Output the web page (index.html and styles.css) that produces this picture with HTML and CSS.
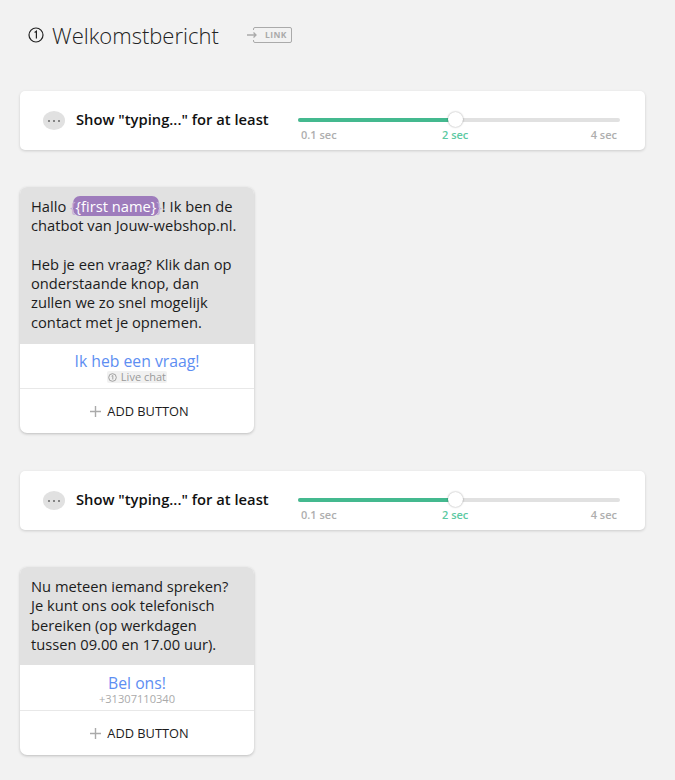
FILE: index.html
```html
<!DOCTYPE html>
<html lang="nl">
<head>
<meta charset="utf-8">
<title>Welkomstbericht</title>
<link rel="stylesheet" href="styles.css">
</head>
<body>
<header class="title-row">
  <svg class="info-icon" width="16" height="16" viewBox="0 0 16 16"><circle cx="8" cy="8" r="7" fill="none" stroke="#222" stroke-width="1.2"/><path d="M6.6 5.4 8.4 4.2V11.6" fill="none" stroke="#222" stroke-width="1.2"/></svg>
  <h1 class="title">Welkomstbericht</h1>
  <span class="link-badge">
    <svg class="link-arrow" width="12" height="10" viewBox="0 0 12 10"><path d="M0 5H9M6.5 2.5 9 5 6.5 7.5" fill="none" stroke="#aaa" stroke-width="1.3"/></svg>
    <span class="link-box">LINK</span>
  </span>
</header>

<section class="typing-card">
  <span class="dots"><i></i><i></i><i></i></span>
  <span class="typing-label">Show "typing..." for at least</span>
  <div class="slider">
    <div class="track"><div class="fill"></div><div class="knob"></div></div>
    <div class="ticks"><span>0.1 sec</span><span class="active">2 sec</span><span>4 sec</span></div>
  </div>
</section>

<section class="message first">
  <div class="bubble">Hallo <span class="brace">{</span><span class="pill">{first name}</span><span class="brace">}</span>! Ik ben de chatbot van Jouw-webshop.nl.<br><br>Heb je een vraag? Klik dan op onderstaande knop, dan zullen we zo snel mogelijk contact met je opnemen.</div>
  <div class="btn">
    <div class="btn-title">Ik heb een vraag!</div>
    <div class="btn-sub"><span class="chip"><svg width="9" height="9" viewBox="0 0 9 9"><circle cx="4.5" cy="4.5" r="3.8" fill="none" stroke="#999" stroke-width=".9"/><path d="M3.6 3.2 4.8 2.5V6.5" fill="none" stroke="#999" stroke-width=".9"/></svg> Live chat</span></div>
  </div>
  <div class="add"><svg width="11" height="11" viewBox="0 0 11 11"><path d="M5.5 0V11M0 5.5H11" stroke="#aaa" stroke-width="1.4"/></svg>ADD BUTTON</div>
</section>

<section class="typing-card second">
  <span class="dots"><i></i><i></i><i></i></span>
  <span class="typing-label">Show "typing..." for at least</span>
  <div class="slider">
    <div class="track"><div class="fill"></div><div class="knob"></div></div>
    <div class="ticks"><span>0.1 sec</span><span class="active">2 sec</span><span>4 sec</span></div>
  </div>
</section>

<section class="message last">
  <div class="bubble">Nu meteen iemand spreken? Je kunt ons ook telefonisch bereiken (op werkdagen tussen 09.00 en 17.00 uur).</div>
  <div class="btn">
    <div class="btn-title">Bel ons!</div>
    <div class="btn-sub phone">+31307110340</div>
  </div>
  <div class="add"><svg width="11" height="11" viewBox="0 0 11 11"><path d="M5.5 0V11M0 5.5H11" stroke="#aaa" stroke-width="1.4"/></svg>ADD BUTTON</div>
</section>
</body>
</html>
```
FILE: styles.css
```css
* { box-sizing: border-box; }
html, body { margin: 0; padding: 0; }
body {
  background: #f2f2f2;
  font-family: "Open Sans", sans-serif;
  color: #1a1a1a;
  height: 780px;
  overflow: hidden;
  padding: 20px 30px 0 20px;
}
.title-row {
  display: flex;
  align-items: center;
  height: 29px;
  padding-left: 8px;
}
.info-icon { flex: none; }
.title {
  margin: 0 0 0 8px;
  font-size: 22px;
  font-weight: 300;
  line-height: 30px;
  color: #222;
  width: 195px;
}
.link-badge { display: flex; align-items: center; }
.link-arrow { margin-right: -6px; position: relative; z-index: 1; background: #f2f2f2; }
.link-box {
  border: 1.5px solid #aaa;
  border-radius: 2px;
  font-size: 8.5px;
  font-weight: 700;
  color: #aaa;
  letter-spacing: .4px;
  line-height: 13px;
  height: 16px;
  padding: 0 4px 0 11px;
}
.typing-card {
  display: flex;
  align-items: flex-start;
  height: 59px;
  margin-top: 42px;
  background: #fff;
  border-radius: 5px;
  box-shadow: 0 1px 3px rgba(0,0,0,.16);
  padding: 0 25px 0 23px;
}
.typing-card.second { margin-top: 38px; }
.dots {
  display: flex;
  gap: 3px;
  align-items: center;
  justify-content: center;
  flex: none;
  width: 22px;
  height: 19px;
  margin-top: 20px;
  border-radius: 50%;
  background: #e1e1e1;
}
.dots i { width: 2px; height: 2px; border-radius: 50%; background: #666; }
.typing-label {
  flex: none;
  width: 222px;
  margin: 18px 0 0 11px;
  font-size: 14.75px;
  font-weight: 600;
  line-height: 20px;
  color: #111;
}
.slider { flex: 1; padding-top: 27px; }
.track {
  position: relative;
  height: 4px;
  border-radius: 2px;
  background: #e1e1e1;
}
.fill {
  width: 157px;
  height: 4px;
  border-radius: 2px;
  background: #44b98f;
}
.knob {
  position: absolute;
  left: 150px;
  top: -6px;
  width: 15px;
  height: 15px;
  border-radius: 50%;
  background: #fff;
  box-shadow: 0 0 2px rgba(0,0,0,.4);
}
.ticks {
  position: relative;
  display: flex;
  justify-content: space-between;
  margin-top: 5px;
  padding: 0 3px;
  font-size: 11px;
  font-weight: 600;
  line-height: 15px;
  color: #aeaeae;
}
.ticks .active {
  position: absolute;
  left: 144px;
  color: #5cc9a2;
}
.message {
  width: 234px;
  background: #fff;
  border-radius: 7px;
  box-shadow: 0 1px 3px rgba(0,0,0,.22);
  overflow: hidden;
}
.message.first { margin-top: 37px; }
.message.last { margin-top: 37px; }
.bubble {
  background: #e1e1e1;
  padding: 10px 11px 12px;
  font-size: 14.7px;
  line-height: 19.3px;
  color: #1c1c1c;
}
.last .bubble { padding-bottom: 11px; }
.pill {
  background: #9e7cbc;
  color: #fff;
  border-radius: 7px;
  margin: 0 -3px;
  padding: 0 3px;
}
.brace { color: #c3aed6; position: relative; z-index: 1; }
.btn {
  height: 45px;
  border-bottom: 1px solid #e8e8e8;
  text-align: center;
  padding-top: 7px;
}
.last .btn { height: 46px; padding-top: 8px; }
.btn-title {
  color: #5d8ef2;
  font-size: 15.75px;
  line-height: 20px;
}
.btn-sub {
  font-size: 11px;
  line-height: 13px;
  color: #999;
  margin-top: -1px;
}
.chip {
  display: inline-block;
  background: #f1f1f1;
  border-radius: 2px;
  padding: 0 1px;
  line-height: 12px;
}
.chip svg { vertical-align: -1px; margin-right: 1px; }
.phone { color: #aaa; font-size: 11.1px; }
.add {
  display: flex;
  align-items: center;
  justify-content: center;
  gap: 6px;
  height: 44px;
  padding-left: 5px;
  font-size: 12.8px;
  color: #1c1c1c;
}
```
